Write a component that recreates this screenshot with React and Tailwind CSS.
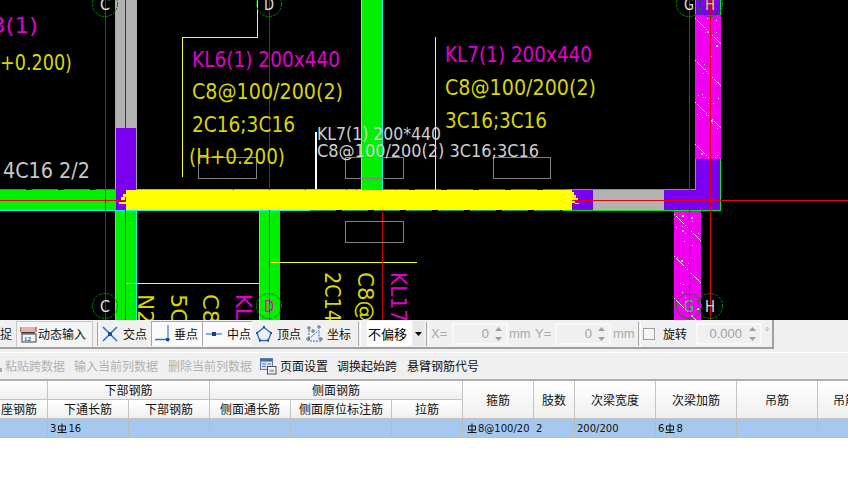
import React from "react";

const CAD = "'DejaVu Sans Condensed','DejaVu Sans',sans-serif";
const CJK = "'Noto Sans CJK SC','Liberation Sans',sans-serif";

function T({ x, y, w, size = 21, fill, children, rot }) {
  return (
    <text
      x={x}
      y={y}
      fontSize={size}
      fill={fill}
      textLength={w}
      lengthAdjust="spacingAndGlyphs"
      transform={rot ? `rotate(90 ${x} ${y})` : undefined}
      style={{ fontFamily: CAD }}
    >
      {children}
    </text>
  );
}

function Axis({ x, y, label, fill = "#e0e0e0" }) {
  return (
    <g>
      <circle cx={x} cy={y} r="12.5" fill="none" stroke="#008000" strokeWidth="1" strokeDasharray="3 1" />
      <T x={x - 5} y={y + 6} w={10} size={16} fill={fill}>{label}</T>
    </g>
  );
}

function Hatch({ x, y, w, h, seed }) {
  const lines = [];
  for (let i = -1; i < Math.ceil(h / 42) + 1; i++) {
    const y0 = y + i * 42 + 3;
    lines.push(<line key={i} x1={x} y1={y0} x2={x + w} y2={y0 + w} stroke="#f4f4f4" strokeWidth="1" strokeDasharray="2 1" />);
  }
  const specks = [];
  let s = seed;
  for (let i = 0; i < Math.floor(h * 0.2); i++) {
    s = (s * 137 + 71) % 1009;
    const sx = x + 2 + (s % (w - 4));
    s = (s * 137 + 71) % 1009;
    const sy = y + (s % h);
    s = (s * 137 + 71) % 1009;
    const sz = s % 5 === 0 ? 2 : 1;
    specks.push(<rect key={i} x={sx} y={sy} width={sz} height={sz} fill="#e8e8e8" />);
  }
  return (
    <g>
      <rect x={x} y={y} width={w} height={h} fill="#f000f0" />
      <svg x={x} y={y} width={w} height={h} viewBox={`${x} ${y} ${w} ${h}`}>
        {lines}
        {specks}
      </svg>
    </g>
  );
}

function Canvas() {
  return (
    <svg width="848" height="320" viewBox="0 0 848 320" className="block bg-black" shapeRendering="crispEdges">
      {/* left column C */}
      <rect x="116" y="0" width="21" height="128" fill="#b2b2b2" />
      <rect x="116" y="128" width="20" height="62" fill="#7b00f0" />
      <rect x="116" y="210" width="21" height="110" fill="#00f000" />
      <line x1="115.5" y1="0" x2="115.5" y2="190" stroke="#40e0d0" />
      <line x1="115.5" y1="210" x2="115.5" y2="320" stroke="#00ffff" />
      <line x1="136.5" y1="128" x2="136.5" y2="190" stroke="#a0a0a0" />
      <line x1="136.5" y1="210" x2="136.5" y2="320" stroke="#00ffff" />

      {/* column D, below */}
      <rect x="260" y="210" width="20" height="110" fill="#00f000" />
      <line x1="259.5" y1="210" x2="259.5" y2="320" stroke="#00ffff" />

      {/* column top centre */}
      <rect x="361" y="0" width="21" height="190" fill="#00f000" />
      <line x1="382.5" y1="0" x2="382.5" y2="190" stroke="#00ffff" />
      <line x1="361" y1="0" x2="361" y2="190" stroke="#a0e0a0" />

      {/* horizontal beam */}
      <rect x="0" y="190" width="116" height="20" fill="#00f000" />
      <rect x="116" y="190" width="10" height="20" fill="#7b00f0" />
      <rect x="572" y="190" width="21" height="20" fill="#7b00f0" />
      <rect x="593" y="190" width="71" height="20" fill="#b2b2b2" />
      <rect x="664" y="190" width="56" height="20" fill="#7b00f0" />
      <rect x="696" y="159" width="24" height="31" fill="#7b00f0" />

      {/* beam edges */}
      <line x1="0" y1="189.5" x2="116" y2="189.5" stroke="#00a0a0" strokeDasharray="26 6" />
      <line x1="137" y1="189.5" x2="361" y2="189.5" stroke="#b0b0b0" />
      <line x1="383" y1="189.5" x2="566" y2="189.5" stroke="#00a0a0" strokeDasharray="26 6" />
      <line x1="566" y1="189.5" x2="696" y2="189.5" stroke="#00f000" />
      <line x1="695.5" y1="159" x2="695.5" y2="190" stroke="#00f000" />
      <line x1="720.5" y1="159" x2="720.5" y2="211" stroke="#00f000" />
      <line x1="0" y1="210.5" x2="310" y2="210.5" stroke="#00ffff" />
      <line x1="310" y1="210.5" x2="562" y2="210.5" stroke="#00a0a0" strokeDasharray="26 6" />
      <line x1="562" y1="210.5" x2="721" y2="210.5" stroke="#00f000" />

      {/* right columns */}
      <rect x="696" y="0" width="24" height="15" fill="#7b00f0" />
      <line x1="695.5" y1="0" x2="695.5" y2="15" stroke="#00f000" />
      <line x1="720.5" y1="0" x2="720.5" y2="15" stroke="#00f000" />
      <Hatch x={695} y={15} w={26} h={144} seed={17} />
      <Hatch x={674} y={211} w={27} h={109} seed={233} />

      {/* yellow leaders */}
      <polyline points="257.5,0 257.5,37.5 182.5,37.5 182.5,177" fill="none" stroke="#ffff00" />
      <line x1="435.5" y1="37" x2="435.5" y2="190" stroke="#ffff60" />
      <line x1="269" y1="262.5" x2="417" y2="262.5" stroke="#ffff00" />
      <line x1="126" y1="283.5" x2="260" y2="283.5" stroke="#ffff00" />
      <rect x="315" y="132" width="2" height="57" fill="#ffffff" />

      {/* red axes */}
      <line x1="0" y1="200.5" x2="848" y2="200.5" stroke="#f00000" />
      <line x1="105.5" y1="0" x2="105.5" y2="320" stroke="#d00000" />
      <line x1="125.5" y1="0" x2="125.5" y2="320" stroke="#d00000" />
      <line x1="269.5" y1="0" x2="269.5" y2="320" stroke="#d00000" />
      <line x1="382.5" y1="210" x2="382.5" y2="320" stroke="#d00000" />
      <line x1="689.5" y1="0" x2="689.5" y2="320" stroke="#e00000" />
      <line x1="710.5" y1="0" x2="710.5" y2="320" stroke="#e00000" />

      {/* selected beam, over the axes */}
      <rect x="126" y="190" width="446" height="20" fill="#ffff00" />
      <rect x="572" y="192" width="2" height="8" fill="#ffff00" />
      <rect x="574" y="195" width="2" height="5" fill="#ffff00" />
      <rect x="576" y="198" width="2" height="2" fill="#ffff00" />
      <rect x="572" y="201" width="3" height="2" fill="#ffff00" />
      <rect x="575" y="203" width="4" height="1" fill="#ffff00" />
      <rect x="123" y="194" width="3" height="3" fill="#ffff00" />
      <rect x="121" y="197" width="4" height="3" fill="#ffff00" />
      <rect x="119" y="202" width="7" height="2" fill="#ffff00" />
      <g fill="#d00000">
        <rect x="233" y="189" width="1" height="1" />
        <rect x="305" y="189" width="1" height="1" />
        <rect x="346" y="189" width="1" height="1" />
        <rect x="356" y="189" width="1" height="1" />
        <rect x="396" y="189" width="1" height="1" />
      </g>

      {/* grey boxes */}
      <g fill="none" stroke="#808080">
        <rect x="198.5" y="157.5" width="58" height="21" />
        <rect x="345.5" y="157.5" width="58" height="21" />
        <rect x="493.5" y="157.5" width="57" height="21" />
        <rect x="345.5" y="221.5" width="58" height="21" />
      </g>

      <g shapeRendering="auto">
        <Axis x={105} y={4} label="C" />
        <Axis x={269} y={4} label="D" />
        <Axis x={689} y={4} label="G" />
        <Axis x={710} y={4} label="H" fill="#d8d840" />
        <Axis x={105} y={306} label="C" />
        <Axis x={269} y={306} label="D" fill="#e000d0" />
        <Axis x={689} y={306} label="G" fill="#30d030" />
        <Axis x={710} y={306} label="H" />

        <T x={-9} y={33} w={47} fill="#e000d0">3(1)</T>
        <T x={0} y={70} w={72} fill="#d8d800">+0.200)</T>
        <T x={3} y={178} w={87} fill="#c8c8c8">4C16 2/2</T>

        <T x={192} y={67} w={148} fill="#e000d0">KL6(1) 200x440</T>
        <T x={192} y={99} w={151} fill="#d8d800">C8@100/200(2)</T>
        <T x={192} y={132} w={103} fill="#d8d800">2C16;3C16</T>
        <T x={189} y={164} w={96} fill="#d8d800">(H+0.200)</T>

        <T x={445} y={62} w={147} fill="#e000d0">KL7(1) 200x440</T>
        <T x={445} y={95} w={151} fill="#d8d800">C8@100/200(2)</T>
        <T x={445} y={128} w={102} fill="#d8d800">3C16;3C16</T>

        <T x={317} y={140} w={124} size={17} fill="#d0d0d0">KL7(1) 200*440</T>
        <T x={317} y={157} w={222} size={17} fill="#d0d0d0">C8@100/200(2) 3C16;3C16</T>

        <T x={138} y={294} w={30} rot fill="#d8d800">N2</T>
        <T x={171} y={294} w={30} rot fill="#d8d800">5C</T>
        <T x={203} y={294} w={30} rot fill="#d8d800">C8</T>
        <T x={236} y={294} w={26} rot fill="#e000d0">KL</T>
        <T x={325} y={272} w={50} rot fill="#d8d800">2C14</T>
        <T x={358} y={272} w={50} rot fill="#d8d800">C8@</T>
        <T x={391} y={272} w={50} rot fill="#e000d0">KL17</T>
      </g>
    </svg>
  );
}

const Sep = ({ className = "" }) => (
  <div className={"w-[3px] h-[24px] border-l border-r border-l-[#a8a8a8] border-r-white shrink-0 " + className} />
);

const Spin = () => (
  <svg width="9" height="20" viewBox="0 0 9 20" className="shrink-0">
    <path d="M4.5 3 L8 7 H1 Z" fill="#a0a0a0" />
    <path d="M4.5 17 L8 13 H1 Z" fill="#a0a0a0" />
  </svg>
);

const Rebar = () => (
  <svg width="10" height="10" viewBox="0 0 10 10" className="inline-block shrink-0 mx-[1px]">
    <path d="M1.5 3 H8.5 V7 H1.5 Z M5 0.5 V9.5 M0.5 9.5 H9.5" fill="none" stroke="#101010" strokeWidth="1" />
  </svg>
);

const Icons = {
  calc: (
    <svg width="17" height="17" viewBox="0 0 17 17" className="shrink-0">
      <rect x="0" y="1" width="16" height="5" fill="#e8b0a8" />
      <line x1="0" y1="1" x2="0" y2="6" stroke="#a03020" />
      <line x1="16" y1="1" x2="16" y2="6" stroke="#a03020" />
      <rect x="1" y="6" width="14" height="1.5" fill="#404040" />
      <rect x="2" y="8" width="14" height="8" fill="#f4f4f4" stroke="#404040" />
      <text x="4" y="15" fontSize="7" fill="#000" style={{ fontFamily: "'Liberation Serif',serif" }}>12</text>
    </svg>
  ),
  cross: (
    <svg width="16" height="16" viewBox="0 0 16 16" className="shrink-0">
      <path d="M1 1 L15 15 M15 1 L1 15" stroke="#2a70c8" strokeWidth="1.5" />
      <rect x="6" y="6" width="4" height="4" fill="#1a4a98" />
    </svg>
  ),
  perp: (
    <svg width="16" height="18" viewBox="0 0 16 18" className="shrink-0">
      <path d="M13 0 V17" stroke="#5a96d8" strokeWidth="1.5" />
      <path d="M0 14.5 H15" stroke="#2a70c8" strokeWidth="1.5" />
      <rect x="11" y="13" width="3" height="3" fill="#1a4a98" />
    </svg>
  ),
  mid: (
    <svg width="16" height="6" viewBox="0 0 16 6" className="shrink-0">
      <path d="M0 3 H16" stroke="#5a96d8" strokeWidth="1.5" />
      <rect x="6" y="1" width="4" height="4" fill="#1a3a90" />
    </svg>
  ),
  pent: (
    <svg width="16" height="16" viewBox="0 0 16 16" className="shrink-0">
      <path d="M8 1.5 L15 7 L12.2 14.5 H3.8 L1 7 Z" fill="none" stroke="#2a70c8" strokeWidth="1.4" />
      <rect x="7" y="0" width="2" height="2" fill="#1a4a98" />
      <rect x="0" y="6" width="2" height="2" fill="#1a4a98" />
      <rect x="14" y="6" width="2" height="2" fill="#1a4a98" />
      <rect x="3" y="13.5" width="2" height="2" fill="#1a4a98" />
      <rect x="11" y="13.5" width="2" height="2" fill="#1a4a98" />
    </svg>
  ),
  coord: (
    <svg width="17" height="17" viewBox="0 0 17 17" className="shrink-0">
      <path d="M3 5 V16 H15 M3 14 L13 5 V14" fill="none" stroke="#2a70c8" strokeWidth="1" strokeDasharray="2 1" />
      <g fill="#fff" stroke="#303030" strokeWidth="0.8">
        <circle cx="3" cy="3" r="1.2" /><circle cx="13" cy="2" r="1.2" /><circle cx="7" cy="6" r="1.2" />
        <circle cx="2" cy="14" r="1.2" /><circle cx="15" cy="14" r="1.2" />
      </g>
    </svg>
  ),
  page: (
    <svg width="17" height="18" viewBox="0 0 17 18" className="shrink-0">
      <rect x="0.5" y="1.5" width="12" height="11" fill="#d8e4f4" stroke="#5a7db0" />
      <rect x="1" y="2" width="11" height="2.5" fill="#3a6cb0" />
      <path d="M2 7 H6 M2 9.5 H6 M7.5 7 H11" stroke="#5a7db0" />
      <rect x="7.5" y="9.5" width="8.5" height="7.5" fill="#f4f4f4" stroke="#505050" />
      <rect x="9.5" y="12.5" width="4.5" height="2.5" fill="#b0b0b0" />
    </svg>
  ),
};

function Toolbar1() {
  return (
    <div className="h-[29px] w-[774px] flex items-center border-b-2 border-r-2 border-[#a0a0a0] text-[12px] text-[#101010] shrink-0 overflow-hidden">
      <span className="w-[12px] shrink-0">捉</span>
      <div className="w-[3px] shrink-0" />
      <div className="w-[77px] h-[26px] ml-px flex items-center gap-[1px] pl-[3px] border border-[#c8c8c8] border-b-0 bg-[#f4f4f4] shrink-0">
        {Icons.calc}
        <span className="whitespace-nowrap">动态输入</span>
      </div>
      <Sep className="ml-[4px]" />
      <div className="w-[2px] shrink-0" />
      {Icons.cross}
      <span className="ml-[5px] w-[24px] shrink-0">交点</span>
      <div className="ml-[4px] w-[51px] h-[25px] flex items-center gap-[3px] pl-[3px] border-l border-t border-[#a8a8a8] bg-[#fafafa] shrink-0">
        {Icons.perp}
        <span className="whitespace-nowrap">垂点</span>
      </div>
      <div className="w-[50px] h-[25px] flex items-center gap-[5px] pl-[3px] border-l border-t border-[#a8a8a8] bg-[#fafafa] shrink-0">
        {Icons.mid}
        <span className="whitespace-nowrap">中点</span>
      </div>
      <div className="ml-[4px] shrink-0">{Icons.pent}</div>
      <span className="ml-[5px] w-[24px] shrink-0">顶点</span>
      <div className="ml-[5px] shrink-0">{Icons.coord}</div>
      <span className="ml-[4px] w-[24px] shrink-0">坐标</span>
      <Sep className="ml-[7px]" />
      <div className="ml-[6px] w-[45px] h-[25px] bg-white flex items-center pl-[1px] text-[13px] text-black whitespace-nowrap shrink-0">不偏移</div>
      <div className="w-[11px] h-[25px] bg-[#e8e8e8] ml-px flex items-center justify-center shrink-0">
        <svg width="7" height="4" viewBox="0 0 7 4"><path d="M0 0 H7 L3.5 4 Z" fill="#000" /></svg>
      </div>
      <Sep className="ml-[2px]" />
      <span className="ml-[2px] w-[20px] text-[#a8a8a8] font-['Liberation_Sans'] text-[13px] shrink-0">X=</span>
      <div className="ml-px w-[56px] h-[22px] border-2 border-[#f8f8f8] flex items-center justify-end text-[#a0a0a0] text-[13px] font-['Liberation_Sans'] pr-[3px] gap-[5px] shrink-0">
        <span>0</span><Spin />
      </div>
      <span className="ml-[1px] w-[24px] text-[#a8a8a8] font-['Liberation_Sans'] text-[13px] shrink-0">mm</span>
      <span className="ml-[2px] w-[19px] text-[#a8a8a8] font-['Liberation_Sans'] text-[13px] shrink-0">Y=</span>
      <div className="ml-px w-[56px] h-[22px] border-2 border-[#f8f8f8] flex items-center justify-end text-[#a0a0a0] text-[13px] font-['Liberation_Sans'] pr-[3px] gap-[5px] shrink-0">
        <span>0</span><Spin />
      </div>
      <span className="ml-[2px] w-[24px] text-[#a8a8a8] font-['Liberation_Sans'] text-[13px] shrink-0">mm</span>
      <Sep className="ml-[1px]" />
      <div className="ml-[2px] w-[12px] h-[12px] border border-[#a0a0a0] bg-[#f4f4f4] shrink-0" />
      <span className="ml-[8px] w-[24px] shrink-0">旋转</span>
      <div className="ml-[9px] w-[66px] h-[22px] border-2 border-[#f8f8f8] flex items-center justify-end text-[#a0a0a0] text-[13px] font-['Liberation_Sans'] pr-[3px] gap-[6px] shrink-0">
        <span>0.000</span><Spin />
      </div>
      <span className="ml-[3px] text-[#a0a0a0] text-[10px] -mt-[4px] font-['Liberation_Sans'] shrink-0">°</span>
    </div>
  );
}

function Toolbar2() {
  return (
    <div className="h-[27px] border-t border-white flex items-center text-[12px] text-[#101010] whitespace-nowrap shrink-0">
      <div className="w-[2px] h-[4px] mt-[8px] bg-[#a8a8a8] shrink-0" />
      <span className="ml-[3px] w-[59px] text-[#b0b0b0]">粘贴跨数据</span>
      <span className="ml-[10px] w-[84px] text-[#b0b0b0]">输入当前列数据</span>
      <span className="ml-[10px] w-[84px] text-[#b0b0b0]">删除当前列数据</span>
      <div className="ml-[8px] shrink-0">{Icons.page}</div>
      <span className="ml-[3px] w-[48px]">页面设置</span>
      <span className="ml-[9px] w-[60px]">调换起始跨</span>
      <span className="ml-[10px]">悬臂钢筋代号</span>
    </div>
  );
}

const hd = "flex items-center justify-center border-r border-b border-[#c4c4c4] bg-gradient-to-b from-white to-[#efefef] whitespace-nowrap overflow-hidden";
const cell = "flex items-center border-r border-b border-[#bcbcbc] bg-[#a6c8ee] px-[2px] whitespace-nowrap overflow-hidden font-['DejaVu_Sans'] text-[10px]";

function Table() {
  const cols = ["48px", "81px", "81px", "81px", "101px", "71px", "71px", "41px", "81px", "81px", "81px", "31px"].join(" ");
  return (
    <div
      className="grid text-[12px] text-[#101010] border-t-2 border-[#b0b0b0] w-[848px] overflow-hidden shrink-0 grid-rows-[19px_19px_19px]"
      style={{ gridTemplateColumns: cols }}
    >
      <div className={hd} />
      <div className={hd + " col-span-2"}>下部钢筋</div>
      <div className={hd + " col-span-3"}>侧面钢筋</div>
      <div className={hd + " row-span-2"}>箍筋</div>
      <div className={hd + " row-span-2"}>肢数</div>
      <div className={hd + " row-span-2"}>次梁宽度</div>
      <div className={hd + " row-span-2"}>次梁加筋</div>
      <div className={hd + " row-span-2"}>吊筋</div>
      <div className={hd + " row-span-2 !justify-start pl-[15px]"}>吊筋</div>

      <div className={hd + " !justify-start pl-px"}>座钢筋</div>
      <div className={hd}>下通长筋</div>
      <div className={hd}>下部钢筋</div>
      <div className={hd}>侧面通长筋</div>
      <div className={hd}>侧面原位标注筋</div>
      <div className={hd}>拉筋</div>

      <div className={cell} />
      <div className={cell}>3<Rebar />16</div>
      <div className={cell} />
      <div className={cell} />
      <div className={cell} />
      <div className={cell} />
      <div className={cell + " !pl-[3px]"}><Rebar />8@100/20</div>
      <div className={cell}>2</div>
      <div className={cell}>200/200</div>
      <div className={cell}>6<Rebar />8</div>
      <div className={cell} />
      <div className={cell} />
    </div>
  );
}

export default function App() {
  return (
    <div className="w-[848px] h-[501px] bg-white overflow-hidden flex flex-col" style={{ fontFamily: CJK }}>
      <Canvas />
      <div className="bg-[#f0f0f0] flex flex-col shrink-0">
        <Toolbar1 />
        <div className="h-[3px] shrink-0" />
        <Toolbar2 />
      </div>
      <Table />
    </div>
  );
}
